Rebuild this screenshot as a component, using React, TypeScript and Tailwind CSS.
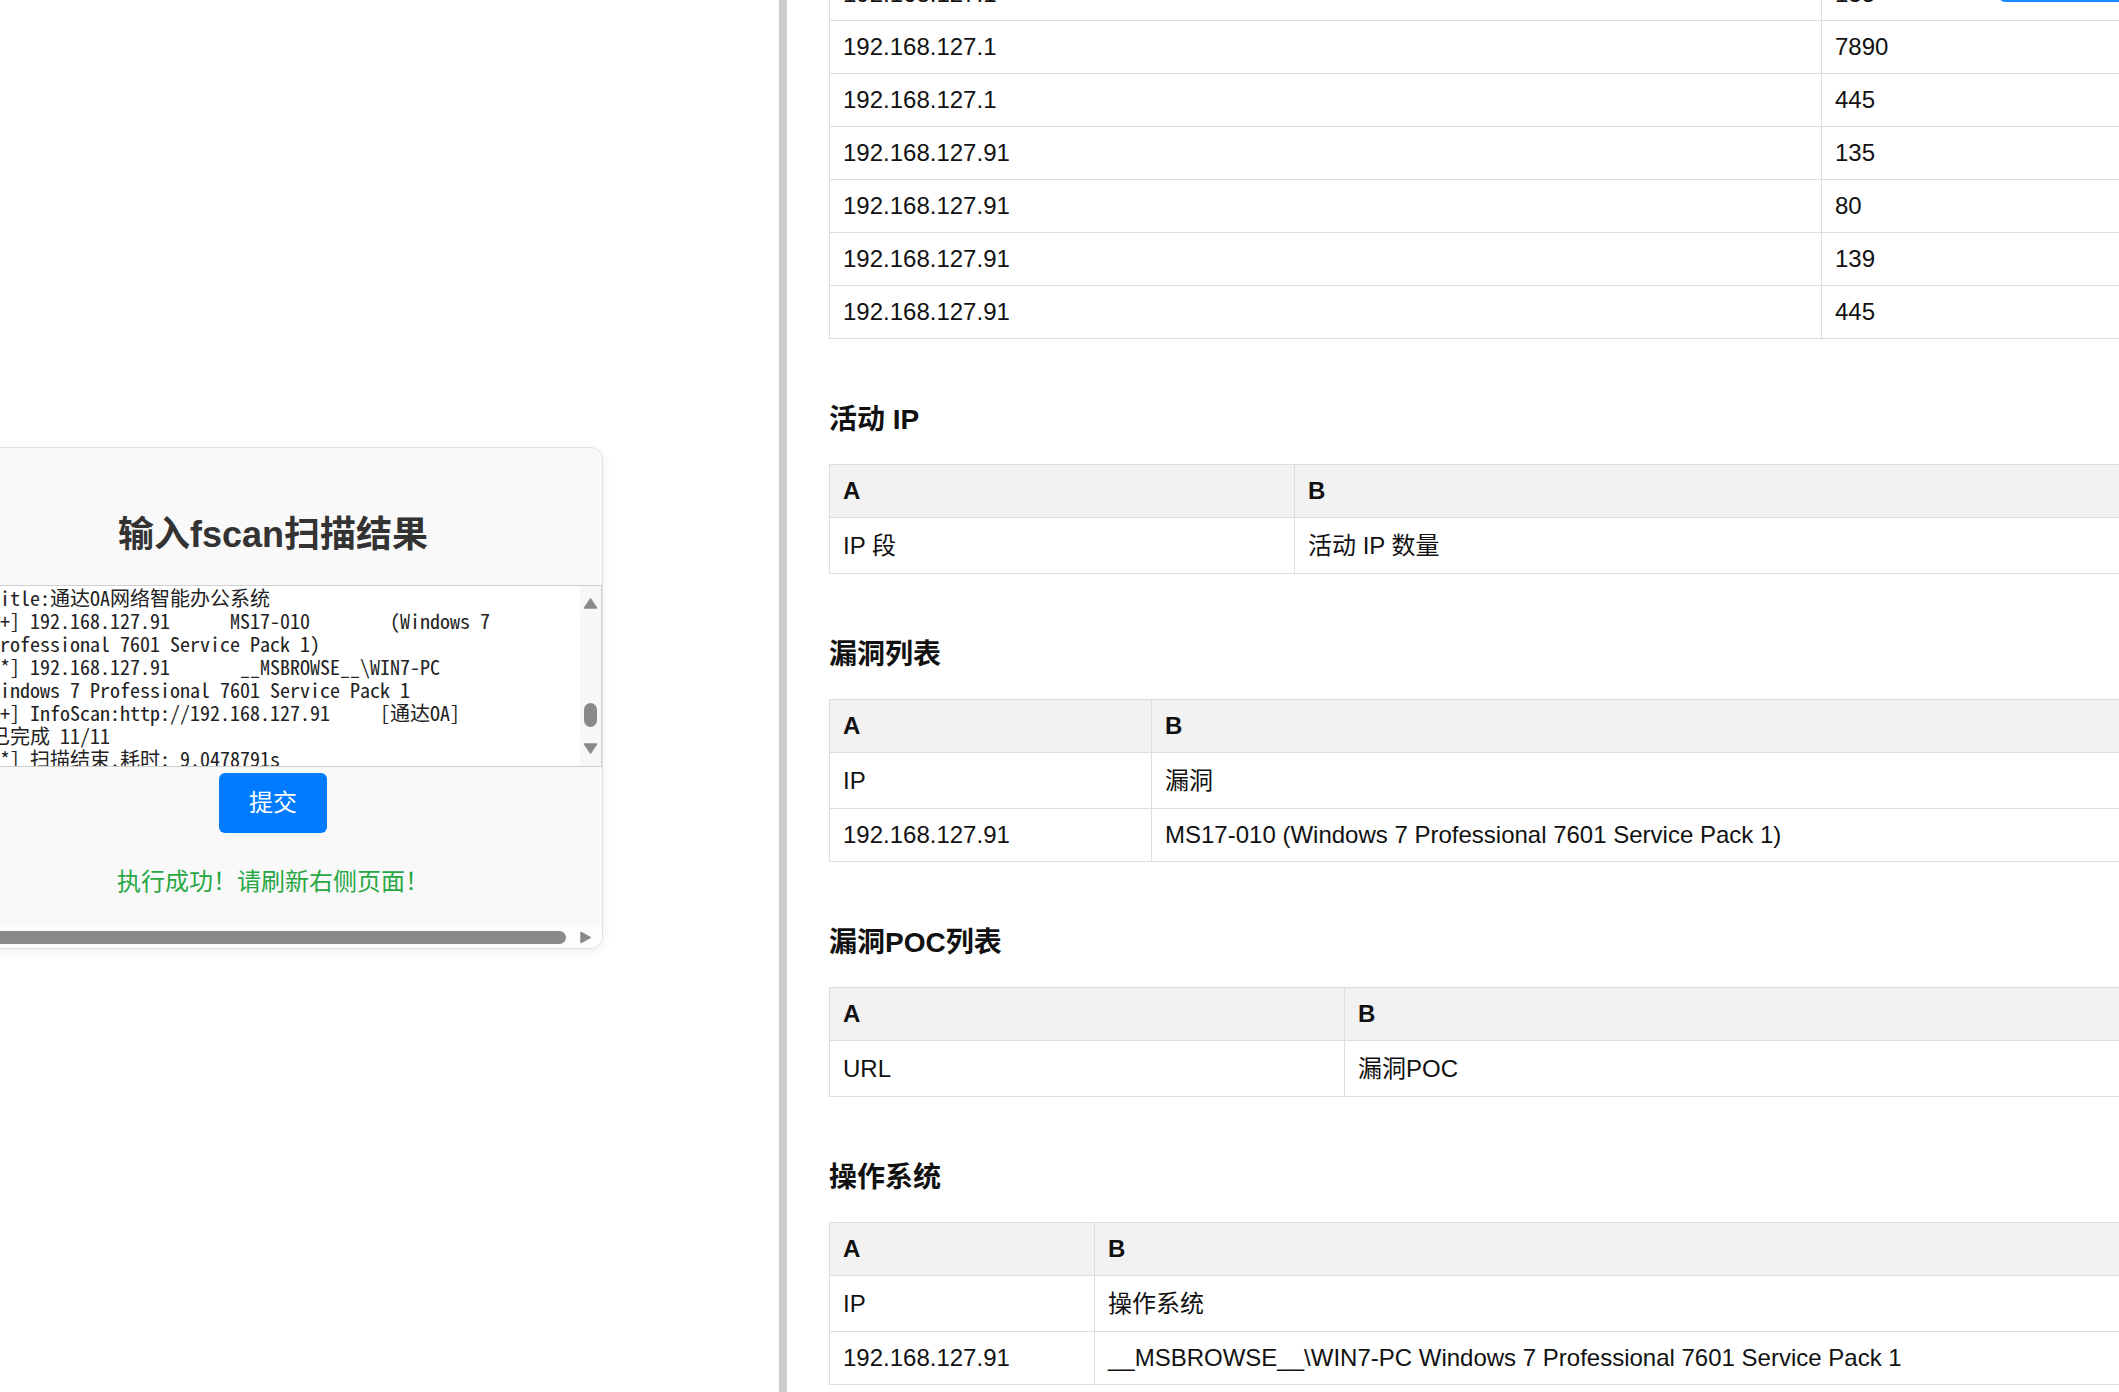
import React from "react";

type Row = { cells: string[]; tall?: boolean; head?: boolean };
type Section = { title?: string; firstCol: number; rows: Row[] };

const sans = "font-['Liberation_Sans','Noto_Sans_CJK_SC',sans-serif]";

const sections: Section[] = [
  {
    firstCol: 992,
    rows: [
      { cells: ["192.168.127.1", "135"] },
      { cells: ["192.168.127.1", "7890"] },
      { cells: ["192.168.127.1", "445"] },
      { cells: ["192.168.127.91", "135"] },
      { cells: ["192.168.127.91", "80"] },
      { cells: ["192.168.127.91", "139"] },
      { cells: ["192.168.127.91", "445"] },
    ],
  },
  {
    title: "活动 IP",
    firstCol: 465,
    rows: [
      { cells: ["A", "B"], head: true },
      { cells: ["IP 段", "活动 IP 数量"], tall: true },
    ],
  },
  {
    title: "漏洞列表",
    firstCol: 322,
    rows: [
      { cells: ["A", "B"], head: true },
      { cells: ["IP", "漏洞"], tall: true },
      { cells: ["192.168.127.91", "MS17-010 (Windows 7 Professional 7601 Service Pack 1)"] },
    ],
  },
  {
    title: "漏洞POC列表",
    firstCol: 515,
    rows: [
      { cells: ["A", "B"], head: true },
      { cells: ["URL", "漏洞POC"], tall: true },
    ],
  },
  {
    title: "操作系统",
    firstCol: 265,
    rows: [
      { cells: ["A", "B"], head: true },
      { cells: ["IP", "操作系统"], tall: true },
      { cells: ["192.168.127.91", "__MSBROWSE__\\WIN7-PC Windows 7 Professional 7601 Service Pack 1"] },
    ],
  },
];

const scanLines = [
  "Title:通达OA网络智能办公系统",
  "[+] 192.168.127.91      MS17-010        (Windows 7",
  "Professional 7601 Service Pack 1)",
  "[*] 192.168.127.91       __MSBROWSE__\\WIN7-PC",
  "Windows 7 Professional 7601 Service Pack 1",
  "[+] InfoScan:http://192.168.127.91     [通达OA]",
  "已完成 11/11",
  "[*] 扫描结束,耗时: 9.0478791s",
];

function ResultTable({ section }: { section: Section }) {
  return (
    <table className="w-[1600px] table-fixed border-collapse border border-[#dddddd] text-[24px] leading-[28px] text-[#111]">
      <colgroup>
        <col style={{ width: section.firstCol }} />
        <col />
      </colgroup>
      <tbody>
        {section.rows.map((row, i) => (
          <tr
            key={i}
            className={
              row.head
                ? "h-[53px] bg-[#f2f2f2] font-bold"
                : row.tall
                  ? "h-[56px]"
                  : "h-[53px]"
            }
          >
            {row.cells.map((c, j) => (
              <td key={j} className="border border-[#dddddd] px-[13px] py-0 align-middle whitespace-nowrap">
                {c}
              </td>
            ))}
          </tr>
        ))}
      </tbody>
    </table>
  );
}

function Triangle({ dir }: { dir: "up" | "down" | "right" }) {
  if (dir === "right") {
    return (
      <svg width="11" height="13" viewBox="0 0 11 13">
        <path d="M1 1.5 L10 6.5 L1 11.5 Z" fill="#8a8a8a" stroke="#8a8a8a" strokeLinejoin="round" strokeWidth="1.5" />
      </svg>
    );
  }
  return (
    <svg width="15" height="11" viewBox="0 0 15 11">
      <path
        d={dir === "up" ? "M1.5 10 L7.5 1 L13.5 10 Z" : "M1.5 1 L7.5 10 L13.5 1 Z"}
        fill="#8a8a8a"
        stroke="#8a8a8a"
        strokeLinejoin="round"
        strokeWidth="1.5"
      />
    </svg>
  );
}

function InputCard() {
  return (
    <div className="ml-[-20px] flex h-[502px] w-[623px] flex-col overflow-hidden rounded-[12px] border border-[#e2e2e2] bg-[#f9f9f9] shadow-[0_2px_10px_rgba(0,0,0,0.08)]">
      {/* heading */}
      <div className={`mt-[65px] w-[584px] text-center text-[36px] leading-[44px] font-bold text-[#333] ${sans}`}>
        输入fscan扫描结果
      </div>

      {/* fake textarea, scrolled to the end */}
      <div className="mt-[28px] flex h-[182px] border-y border-r border-[#cfcfcf] bg-white">
        <div className="flex-1 overflow-hidden pl-[9px] font-['Noto_Sans_Mono_CJK_SC','Liberation_Mono',monospace] text-[20px] leading-[23px] text-[#222] whitespace-pre">
          {scanLines.map((l, i) => (
            <div key={i}>{l}</div>
          ))}
        </div>
        <div className="flex w-[21px] flex-col items-center bg-[#f7f7f7]">
          <div className="mt-[12px]">
            <Triangle dir="up" />
          </div>
          <div className="mt-[94px] h-[24px] w-[13px] rounded-full bg-[#8a8a8a]" />
          <div className="mt-[16px]">
            <Triangle dir="down" />
          </div>
        </div>
      </div>

      <div className="mt-[6px] flex w-[584px] justify-center">
        <button className={`h-[60px] w-[108px] rounded-[6px] bg-[#007bff] text-[24px] text-white ${sans}`}>
          提交
        </button>
      </div>

      <div className={`mt-[33px] w-[584px] text-center text-[24px] leading-[32px] text-[#28a745] ${sans}`}>
        执行成功！请刷新右侧页面！
      </div>

      {/* horizontal scrollbar */}
      <div className="mt-auto flex h-[22px] items-center bg-[#fdfdfd]">
        <div className="h-[13px] w-[585px] rounded-full bg-[#8a8a8a]" />
        <div className="ml-[14px]">
          <Triangle dir="right" />
        </div>
      </div>
    </div>
  );
}

export default function App() {
  return (
    <div className={`flex h-[1392px] w-full overflow-hidden bg-white ${sans}`}>
      <div className="h-full w-[779px] shrink-0 overflow-hidden bg-white pt-[447px]">
        <InputCard />
      </div>

      <div className="h-full w-[8px] shrink-0 bg-[#cccccc]" />

      <div className="relative h-full flex-1 overflow-hidden bg-white">
        <div className="absolute left-[1212px] top-[-38px] h-[40px] w-[160px] rounded-[6px] bg-[#1a8cff]" />
        <div className="mt-[-33px] flex flex-col pl-[42px]">
          {sections.map((s, i) => (
            <div key={i} className="flex flex-col">
              {s.title && (
                <h3 className="mt-[65px] mb-[28px] h-[32px] text-[28px] leading-[32px] font-bold text-[#111]">
                  {s.title}
                </h3>
              )}
              <ResultTable section={s} />
            </div>
          ))}
        </div>
      </div>
    </div>
  );
}
